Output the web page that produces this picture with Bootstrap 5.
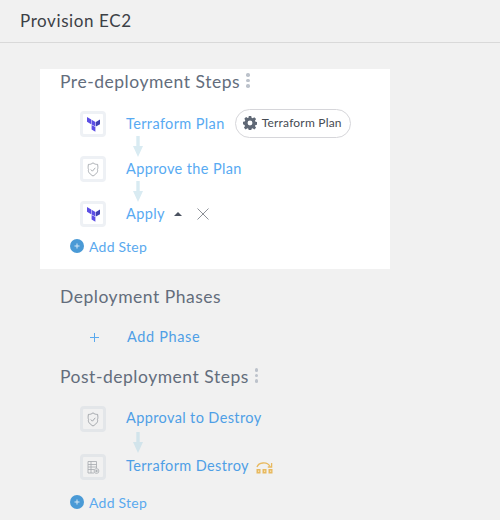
<!DOCTYPE html>
<html lang="en">
<head>
<meta charset="utf-8">
<title>Provision EC2</title>
<link href="https://cdn.jsdelivr.net/npm/bootstrap@5.3.0/dist/css/bootstrap.min.css" rel="stylesheet">
<style>
html,body{height:520px;overflow:hidden}
body{background:#f1f1f1;font-family:"Lato","Noto Sans",sans-serif;color:#3f4349}
.page-head{height:43px;padding-left:20px;border-bottom:1px solid #d9d9d9;font-size:17px;line-height:42px;letter-spacing:.6px;color:#3c4046}
.steps-panel{width:350px;margin-left:40px;margin-top:26px;height:200px;background:#fff;padding-left:20px}
.section-below{margin-left:40px;padding-left:20px}
.sec-title{font-size:17.5px;line-height:26px;color:#636d7c;letter-spacing:.52px}
.sec-phases{margin-top:15px}
.sec-post{margin-top:14px}
.dots{width:4px;margin-left:6px;margin-top:-3px;gap:2px}
.dots i{display:block;width:3.5px;height:3.5px;border-radius:50%;background:#bcc2cb}
.title-gap{height:16px}
.step-row{height:26px;margin-left:20px}
.phase-row{margin-top:14px}
.phase-plus{margin-left:10px}
.step-ico{width:26px;height:26px;border:3px solid #eef1f5;border-radius:4px;background:#fff;flex:none}
.section-below .step-ico{background:#f1f1f1;border-color:#e3e6e9}
.step-link{margin-left:20px;font-size:14.5px;letter-spacing:.38px;color:#58aaf2;text-decoration:none;white-space:nowrap}
.section-below .step-link{color:#4f9fe6}
.section-below .phase-link{margin-left:28px;letter-spacing:.65px}
.section-below .post-link{margin-bottom:2px}
.link-arrow{display:flow-root;height:19px;margin-left:70px;overflow:visible}
.link-arrow svg{display:block;overflow:visible;margin-top:-1px}
.arrow-long{height:22px}
.arrow-long svg{margin-top:0}
.add-gap{height:4px}
.add-gap-post{height:7px}
.add-step{margin-left:10px;font-size:14px;letter-spacing:.25px;color:#5aa9ee;text-decoration:none}
.add-dot{width:14px;height:14px;border-radius:50%;background:#4a9ad6;margin-right:5px;flex:none}
.pill{height:29px;width:116px;margin-left:10px;margin-top:-2px;border:1px solid #d6d6da;border-radius:15px;font-size:12px;letter-spacing:.2px;color:#464b53;padding-left:7px;gap:5px;white-space:nowrap}
.caret-ico{margin-left:9px}
.close-ico{margin-left:15px}
.gold-ico{margin-left:7px}
</style>
</head>
<body>
<div class="page-head">Provision EC2</div>

<div class="steps-panel">
  <div class="d-flex align-items-center sec-title">Pre-deployment Steps
    <span class="dots d-flex flex-column"><i></i><i></i><i></i></span>
  </div>
  <div class="title-gap"></div>
  <div class="step-row d-flex align-items-center">
    <span class="step-ico d-flex align-items-center justify-content-center"><svg width="13" height="15" viewBox="0 0 13 15"><path d="M0 0 4.2 2.4V7.2L0 4.8Z" fill="#5c4ee5"/><path d="M4.6 2.7 8.4 5V9.6L4.6 7.4Z" fill="#5c4ee5"/><path d="M13 2.6V7.2L8.9 9.6V5Z" fill="#4040b2"/><path d="M4.6 7.9 8.4 10.1V14.8L4.6 12.6Z" fill="#5c4ee5"/></svg></span>
    <a class="step-link" href="#">Terraform Plan</a>
    <span class="pill d-flex align-items-center"><svg width="14" height="14" viewBox="0 0 16 16"><path fill="#5f6875" fill-rule="evenodd" d="M6.6 0h2.8l.4 2.1 1.3.6 1.8-1.2 2 2-1.2 1.8.6 1.3 2.1.4v2.8l-2.1.4-.6 1.3 1.2 1.8-2 2-1.8-1.2-1.3.6-.4 2.1H6.6l-.4-2.1-1.3-.6-1.8 1.2-2-2 1.2-1.8-.6-1.3L-.1 9.4V6.6l2.1-.4.6-1.3L1.5 3.1l2-2 1.8 1.2 1-.4ZM8 5.2a2.8 2.8 0 1 0 0 5.6 2.8 2.8 0 0 0 0-5.6Z"/></svg>Terraform Plan</span>
  </div>
  <div class="link-arrow"><svg width="16" height="21" viewBox="0 0 16 21"><path d="M6.3 0h3.4v10H13L8 21 3 10h3.3Z" fill="#d9ebf2"/></svg></div>
  <div class="step-row d-flex align-items-center">
    <span class="step-ico d-flex align-items-center justify-content-center"><svg width="14" height="15" viewBox="0 0 14 15" fill="none" stroke="#a2a6ab" stroke-width=".9"><path d="M7 .8C8.6 2.2 10 2.4 11.6 2.4 12 5 12 6.5 11.4 7.5 12.6 10 9.5 12.5 7 14 4.5 12.5 1.4 10 2.6 7.5 2 6.5 2 5 2.4 2.4 4 2.4 5.4 2.2 7 .8Z"/><path d="M4.8 7.5 6.4 9.2 9.3 5.8"/></svg></span>
    <a class="step-link" href="#">Approve the Plan</a>
  </div>
  <div class="link-arrow"><svg width="16" height="21" viewBox="0 0 16 21"><path d="M6.3 0h3.4v10H13L8 21 3 10h3.3Z" fill="#d9ebf2"/></svg></div>
  <div class="step-row d-flex align-items-center">
    <span class="step-ico d-flex align-items-center justify-content-center"><svg width="13" height="15" viewBox="0 0 13 15"><path d="M0 0 4.2 2.4V7.2L0 4.8Z" fill="#5c4ee5"/><path d="M4.6 2.7 8.4 5V9.6L4.6 7.4Z" fill="#5c4ee5"/><path d="M13 2.6V7.2L8.9 9.6V5Z" fill="#4040b2"/><path d="M4.6 7.9 8.4 10.1V14.8L4.6 12.6Z" fill="#5c4ee5"/></svg></span>
    <a class="step-link" href="#">Apply</a>
    <svg class="caret-ico" width="8" height="6" viewBox="0 0 8 6"><path d="M0 5 4 1 8 5Z" fill="#4b5260"/></svg>
    <svg class="close-ico" width="12" height="12" viewBox="0 0 12 12" stroke="#8d9198" stroke-width="1"><path d="M.5.5 11.5 11.5M11.5.5.5 11.5"/></svg>
  </div>
  <div class="add-gap"></div>
  <a class="add-step d-inline-flex align-items-center" href="#"><span class="add-dot d-flex align-items-center justify-content-center"><svg width="6" height="6" viewBox="0 0 6 6" stroke="#d5e8f6" stroke-width="1"><path d="M3 .5v5M.5 3h5"/></svg></span>Add Step</a>
</div>

<div class="section-below">
  <div class="sec-title sec-phases">Deployment Phases</div>
  <div class="step-row phase-row d-flex align-items-center">
    <svg class="phase-plus" width="9" height="9" viewBox="0 0 9 9" stroke="#5aa9ee" stroke-width="1"><path d="M4.5 0v9M0 4.5h9"/></svg>
    <a class="step-link phase-link" href="#">Add Phase</a>
  </div>
  <div class="d-flex align-items-center sec-title sec-post">Post-deployment Steps
    <span class="dots d-flex flex-column"><i></i><i></i><i></i></span>
  </div>
  <div class="title-gap"></div>
  <div class="step-row d-flex align-items-center">
    <span class="step-ico d-flex align-items-center justify-content-center"><svg width="14" height="15" viewBox="0 0 14 15" fill="none" stroke="#9a9ea4" stroke-width=".9"><path d="M7 .8C8.6 2.2 10 2.4 11.6 2.4 12 5 12 6.5 11.4 7.5 12.6 10 9.5 12.5 7 14 4.5 12.5 1.4 10 2.6 7.5 2 6.5 2 5 2.4 2.4 4 2.4 5.4 2.2 7 .8Z"/><path d="M4.8 7.5 6.4 9.2 9.3 5.8"/></svg></span>
    <a class="step-link post-link" href="#">Approval to Destroy</a>
  </div>
  <div class="link-arrow arrow-long"><svg width="16" height="21" viewBox="0 0 16 21"><path d="M6.3 0h3.4v10H13L8 21 3 10h3.3Z" fill="#d2e4eb"/></svg></div>
  <div class="step-row d-flex align-items-center">
    <span class="step-ico d-flex align-items-center justify-content-center"><svg width="14" height="15" viewBox="0 0 14 15" fill="none" stroke="#a6aaaf" stroke-width=".8"><path d="M8 13H2V1.5H10.5V8"/><path d="M2 4.5H10.5M2 7H10.5M2 9.5H8M5 1.5V13"/><circle cx="10.5" cy="11" r="2.4"/><circle cx="10.5" cy="11" r=".8" fill="#a6aaaf"/></svg></span>
    <a class="step-link post-link" href="#">Terraform Destroy</a>
    <svg class="gold-ico" width="17" height="14" viewBox="0 0 17 14"><g fill="none" stroke="#e8b95f" stroke-width="1.3"><path d="M1 7C2.5 2.5 11 1 14 6.5"/><path d="M15.6 3V7H11.8"/></g><g fill="#e8b95f"><rect x=".5" y="9" width="4" height="4.5"/><rect x="6.5" y="9" width="4" height="4.5"/><rect x="12.5" y="9" width="4" height="4.5"/></g><g fill="#f8e3b4"><rect x="2" y="10.5" width="1.2" height="1.4"/><rect x="8" y="10.5" width="1.2" height="1.4"/><rect x="14" y="10.5" width="1.2" height="1.4"/></g></svg>
  </div>
  <div class="add-gap-post"></div>
  <a class="add-step d-inline-flex align-items-center" href="#"><span class="add-dot d-flex align-items-center justify-content-center"><svg width="6" height="6" viewBox="0 0 6 6" stroke="#d5e8f6" stroke-width="1"><path d="M3 .5v5M.5 3h5"/></svg></span>Add Step</a>
</div>
<script src="https://cdn.jsdelivr.net/npm/bootstrap@5.3.0/dist/js/bootstrap.bundle.min.js"></script>
</body>
</html>
